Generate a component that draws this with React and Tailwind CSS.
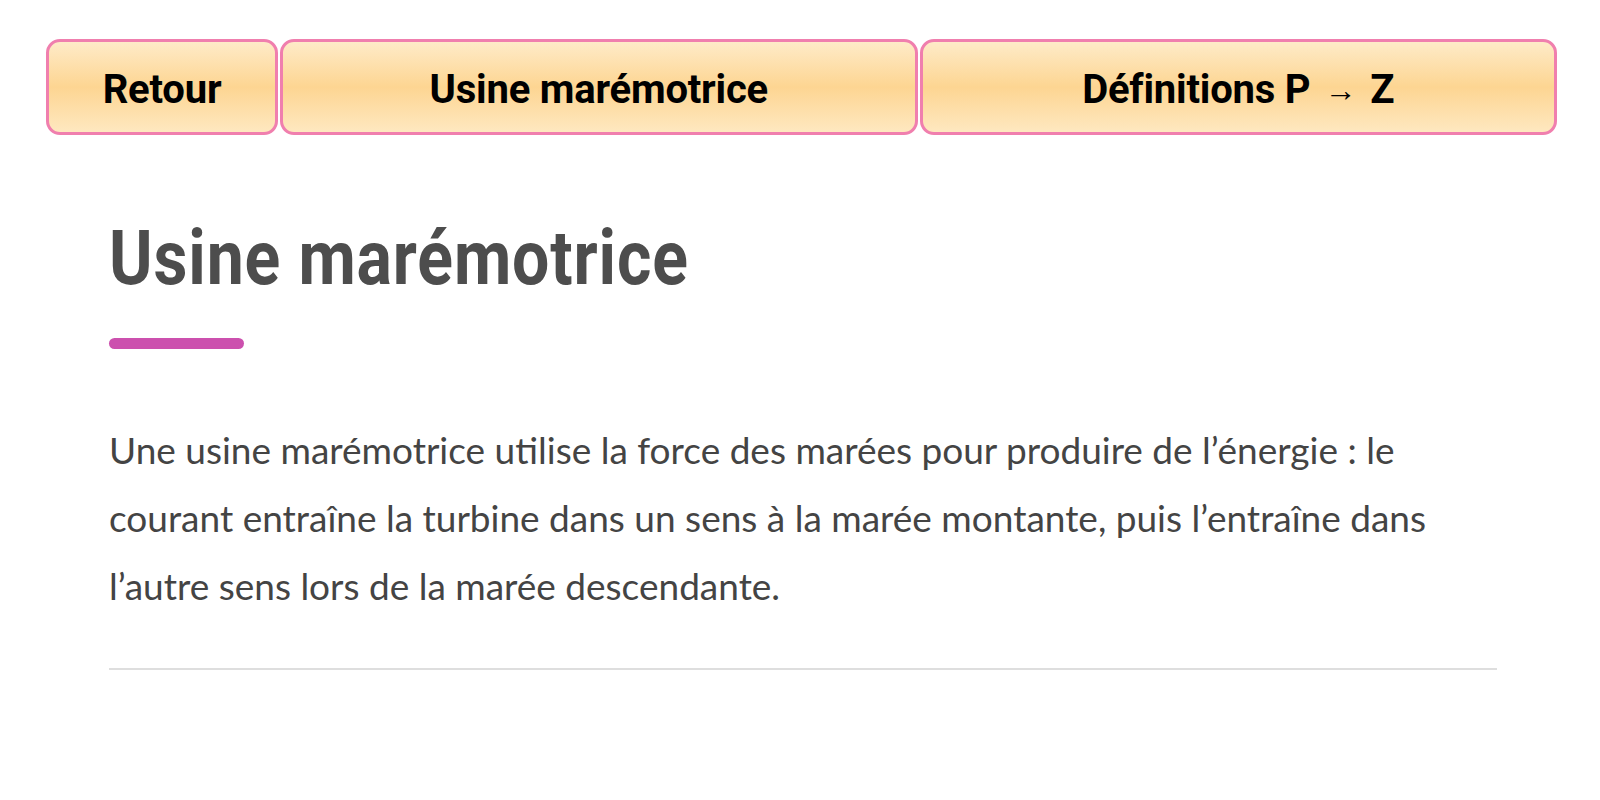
export default function App() {
  const btn =
    "h-[96px] pt-[5px] flex items-center justify-center rounded-[14px] border-[3px] border-[#f07fae] bg-[linear-gradient(180deg,#feebc8_0%,#fdd592_50%,#fee8c0_100%)] text-[40px] font-bold text-black font-['Roboto',sans-serif] tracking-[-0.2px]"

  return (
    <div className="min-h-screen bg-white">
      {/* Nav buttons */}
      <nav className="flex gap-[2px] pl-[46px] pr-[43px] pt-[39px]">
        <button className={`${btn} w-[232px]`}>Retour</button>
        <button className={`${btn} flex-1`}>Usine marémotrice</button>
        <button className={`${btn} flex-1`}>
          Définitions P <span className="text-[32px] mx-[14px]">→</span> Z
        </button>
      </nav>

      {/* Content */}
      <main className="pl-[109px] pr-[103px]">
        <h1 className="mt-[85px] h-[76px] text-[76px] leading-none font-bold text-[#4d4d4d] font-['Roboto',sans-serif]">
          <span className="inline-block origin-left scale-x-[0.87] tracking-[1px] whitespace-nowrap">Usine marémotrice</span>
        </h1>
        <div className="mt-[42px] h-[11px] w-[135px] rounded-full bg-[#cc50ae]" />
        <p className="mt-[67px] text-[37px] leading-[68px] text-[#444] font-['Lato',sans-serif]">
          Une usine marémotrice utilise la force des marées pour produire de l’énergie : le courant entraîne la turbine dans un sens à la marée montante, puis l’entraîne dans l’autre sens lors de la marée descendante.
        </p>
        <div className="mt-[48px] h-[2px] bg-[#dedede]" />
      </main>
    </div>
  )
}
